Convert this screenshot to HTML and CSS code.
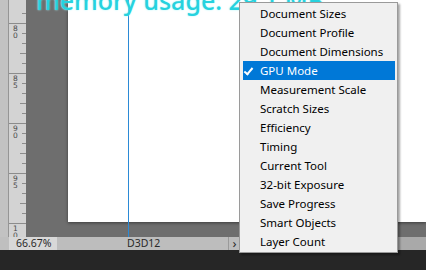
FILE: index.html
```html
<!DOCTYPE html>
<html lang="en">
  <head>
  <meta charset="utf-8">
  <meta name="viewport" content="width=device-width, initial-scale=1">
  <title>Status bar menu</title>
  <link rel="stylesheet" href="styles.css">
  </head>
  <body>
    <div class="app">
      <div class="workspace">
        <div class="edge"></div>
        <div class="ruler">
          <svg width="17" height="237" viewBox="0 0 17 237">
            <g stroke="#8c8c8c" stroke-width="1" shape-rendering="crispEdges">
              <line x1="0" y1="23.5" x2="17" y2="23.5"/>
              <line x1="0" y1="73.5" x2="17" y2="73.5"/>
              <line x1="0" y1="123.5" x2="17" y2="123.5"/>
              <line x1="0" y1="173.5" x2="17" y2="173.5"/>
              <line x1="0" y1="223.5" x2="17" y2="223.5"/>
              <line x1="13" y1="13.5" x2="17" y2="13.5"/>
              <line x1="13" y1="33.5" x2="17" y2="33.5"/>
              <line x1="13" y1="43.5" x2="17" y2="43.5"/>
              <line x1="11" y1="53.5" x2="17" y2="53.5"/>
              <line x1="13" y1="63.5" x2="17" y2="63.5"/>
              <line x1="13" y1="83.5" x2="17" y2="83.5"/>
              <line x1="13" y1="93.5" x2="17" y2="93.5"/>
              <line x1="11" y1="103.5" x2="17" y2="103.5"/>
              <line x1="13" y1="113.5" x2="17" y2="113.5"/>
              <line x1="13" y1="133.5" x2="17" y2="133.5"/>
              <line x1="13" y1="143.5" x2="17" y2="143.5"/>
              <line x1="11" y1="153.5" x2="17" y2="153.5"/>
              <line x1="13" y1="163.5" x2="17" y2="163.5"/>
              <line x1="13" y1="183.5" x2="17" y2="183.5"/>
              <line x1="13" y1="193.5" x2="17" y2="193.5"/>
              <line x1="11" y1="203.5" x2="17" y2="203.5"/>
              <line x1="13" y1="213.5" x2="17" y2="213.5"/>
            </g>
            <g class="ruler-num" fill="#4a4a4a">
              <text x="4" y="31">8</text><text x="4" y="38">0</text>
              <text x="4" y="81">8</text><text x="4" y="88">5</text>
              <text x="4" y="131">9</text><text x="4" y="138">0</text>
              <text x="4" y="181">9</text><text x="4" y="188">5</text>
              <text x="4" y="231">1</text><text x="4" y="238">0</text>
            </g>
          </svg>
        </div>
        <div class="canvas">
          <div class="doc"></div>
          <div class="guide"></div>
        </div>
      </div>
      <div class="statusbar">
        <div class="zoom">66.67%</div>
        <div class="info">D3D12</div>
        <div class="more">&#x203A;</div>
        <div class="rest"></div>
      </div>
      <div class="taskbar"></div>
    </div>

    <div class="memory">memory usage: 29.1 MB</div>

    <ul class="menu">
      <li>Document Sizes</li>
      <li>Document Profile</li>
      <li>Document Dimensions</li>
      <li class="checked">GPU Mode</li>
      <li>Measurement Scale</li>
      <li>Scratch Sizes</li>
      <li>Efficiency</li>
      <li>Timing</li>
      <li>Current Tool</li>
      <li>32-bit Exposure</li>
      <li>Save Progress</li>
      <li>Smart Objects</li>
      <li>Layer Count</li>
    </ul>
  </body>
</html>
```

FILE: styles.css
```css
* {
  margin: 0;
  padding: 0;
  box-sizing: border-box;
}

body {
  font-family: 'Noto Sans', 'Open Sans', sans-serif;
  width: 426px;
  height: 270px;
  overflow: hidden;
  position: relative;
  background: #262626;
}

.app {
  display: flex;
  flex-direction: column;
  height: 270px;
}

.workspace {
  display: flex;
  height: 237px;
}

.edge {
  width: 9px;
  background: #c2c2c2;
  border-right: 1px solid #959595;
}

.ruler {
  width: 17px;
  background: #d3d3d3;
}

.ruler svg {
  display: block;
}

.ruler-num {
  font-family: 'DejaVu Sans', sans-serif;
  font-size: 7.5px;
}

.canvas {
  flex: 1;
  position: relative;
  background: #6e6e6e;
  padding-left: 42px;
}

.doc {
  height: 222px;
  background: #ffffff;
  box-shadow: 0 1px 3px rgba(0, 0, 0, 0.45);
}

.guide {
  position: absolute;
  left: 102px;
  top: 0;
  bottom: 0;
  width: 1px;
  background: #2b8ad6;
}

.statusbar {
  display: flex;
  height: 13px;
  background: #bdbdbd;
  font-size: 10.5px;
  line-height: 13px;
  color: #2a2a2a;
}

.zoom {
  width: 57px;
  border-left: 9px solid #bfbfbf;
  background: #d8d8d8;
  padding-left: 7px;
}

.info {
  width: 171px;
  padding-left: 70px;
}

.more {
  width: 12px;
  border-left: 1px solid #9a9a9a;
  text-align: center;
  font-size: 13px;
  line-height: 12px;
}

.rest {
  flex: 1;
  background: #a9a9a9;
}

.taskbar {
  flex: 1;
  background: #262626;
}

.memory {
  position: absolute;
  left: 36px;
  top: -12px;
  font-size: 25px;
  font-weight: 500;
  line-height: 25px;
  color: #26d2de;
  text-shadow: 0 0 2px #a4f6fa;
  white-space: nowrap;
}

.menu {
  position: absolute;
  left: 239px;
  top: 2px;
  width: 159px;
  list-style: none;
  background: #f0f0f0;
  border: 1px solid #9a9a9a;
  box-shadow: 2px 2px 2px rgba(0, 0, 0, 0.35);
  padding: 1px 0 1px;
  font-size: 11.5px;
  color: #000;
}

.menu li {
  height: 19px;
  line-height: 19px;
  margin: 0 2px 0 3px;
  padding-left: 17px;
  white-space: nowrap;
  position: relative;
}

.menu li.checked {
  background: #0078d7;
  color: #fff;
}

.menu li.checked::before {
  content: "";
  position: absolute;
  left: 3px;
  top: 5px;
  width: 3px;
  height: 7px;
  border: solid #fff;
  border-width: 0 2px 2px 0;
  transform: rotate(40deg);
}
```
